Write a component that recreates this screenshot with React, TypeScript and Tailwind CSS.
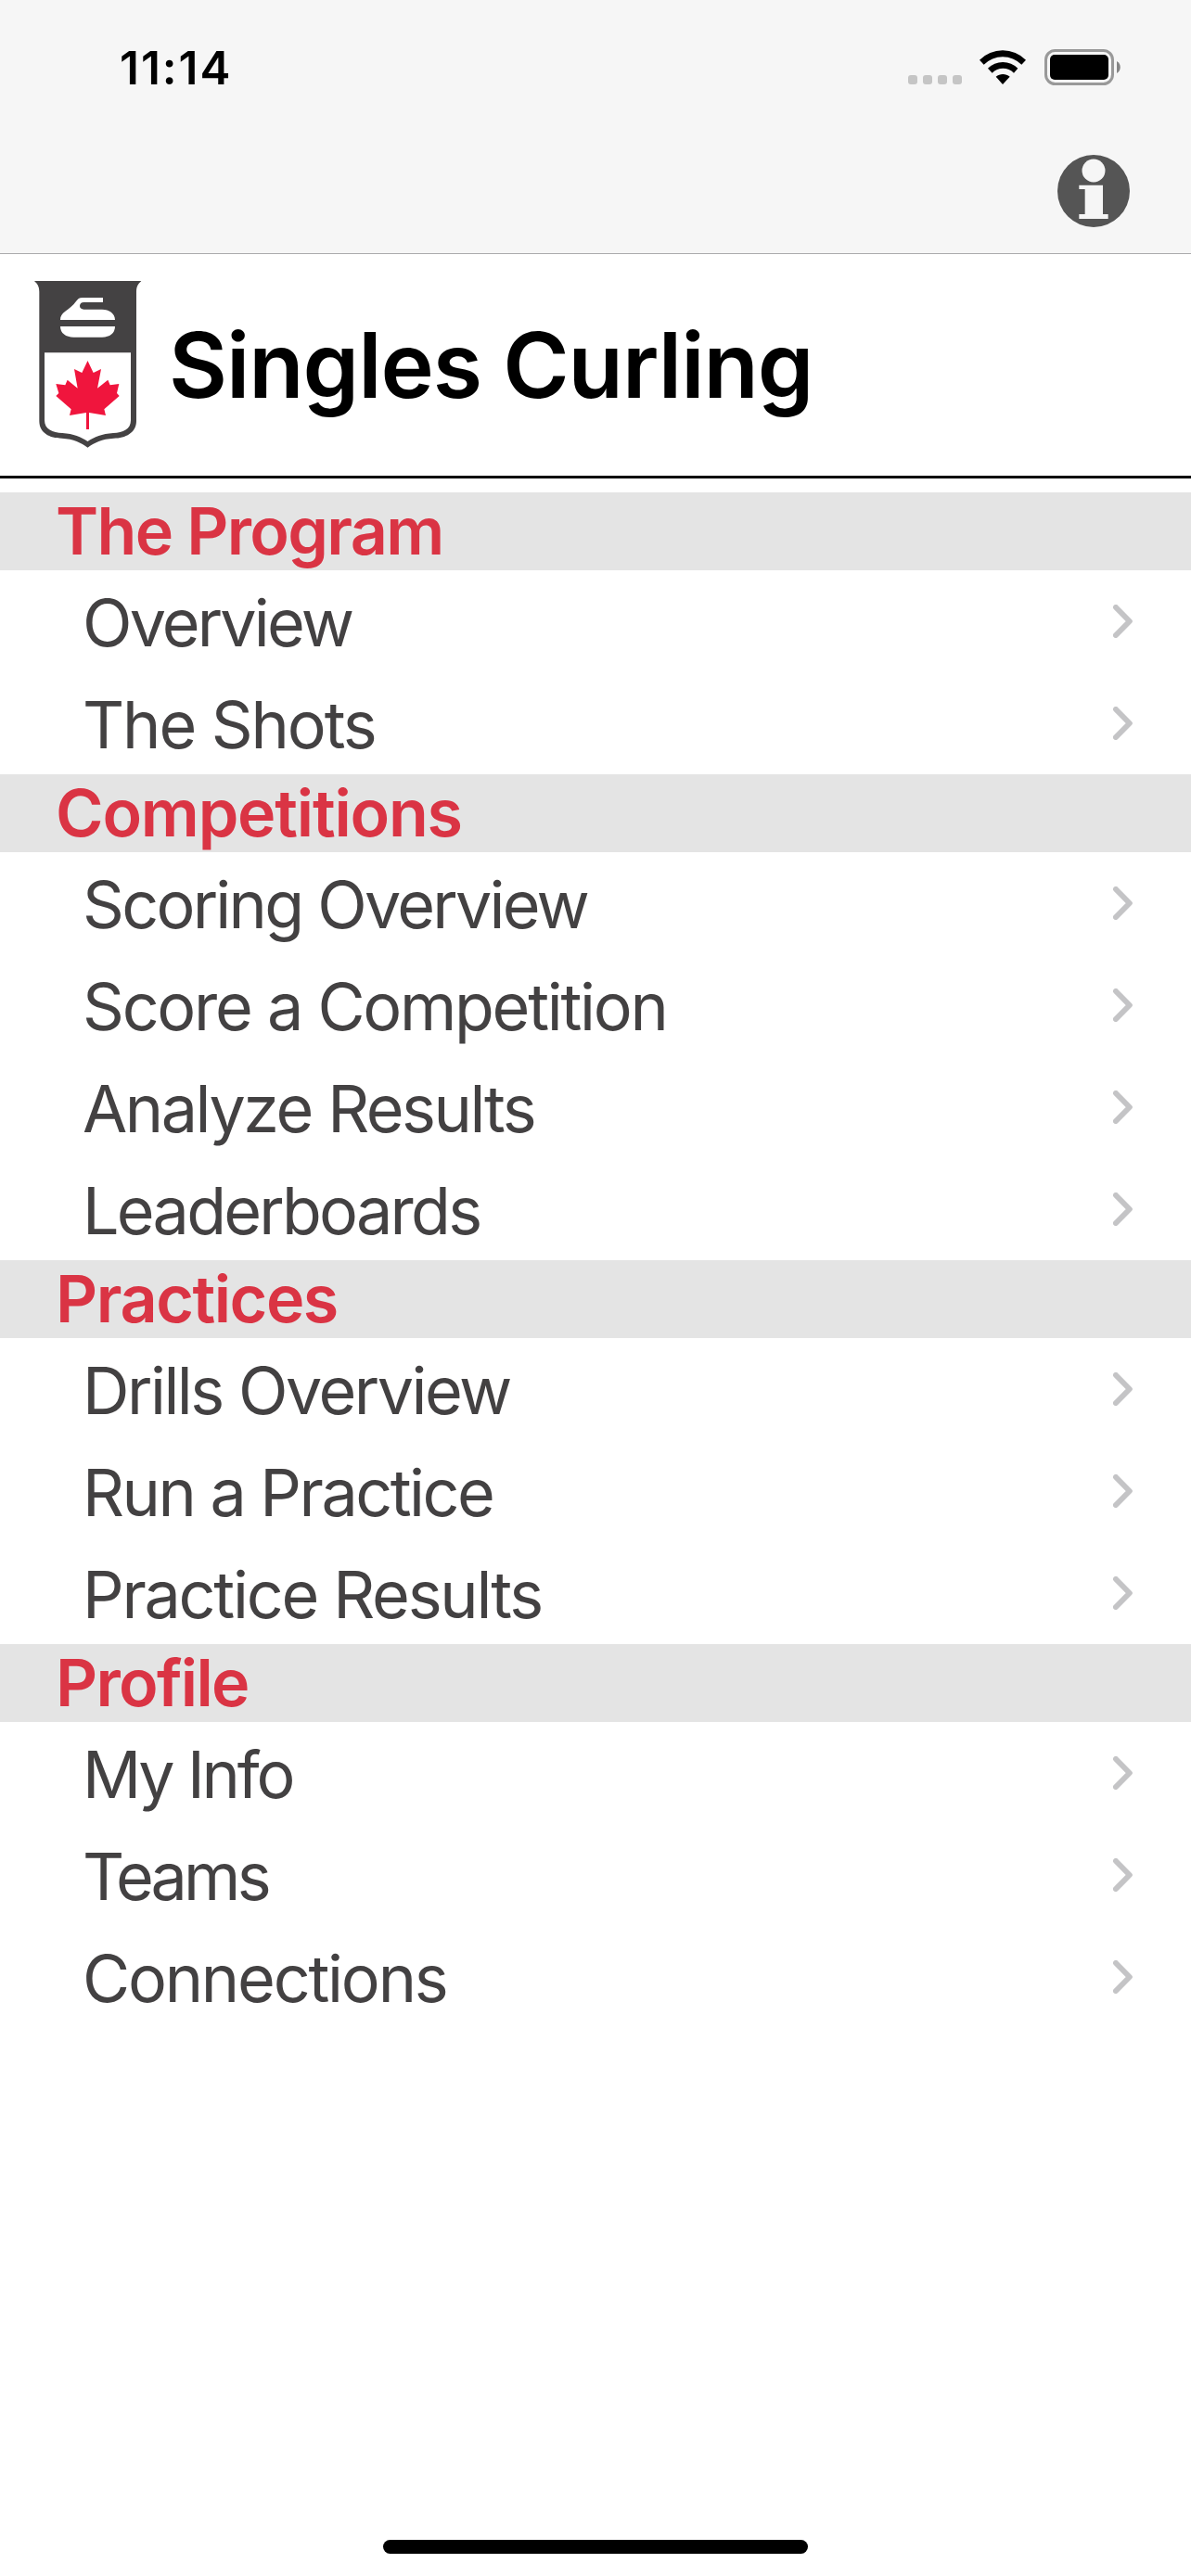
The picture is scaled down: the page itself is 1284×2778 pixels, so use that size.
type Item = { label: string; tracking: string };
type Section = { title: string; tracking: string; items: Item[] };

const sections: Section[] = [
  {
    title: "The Program",
    tracking: "tracking-[-1.7px]",
    items: [
      { label: "Overview", tracking: "tracking-[-2.85px]" },
      { label: "The Shots", tracking: "tracking-[-2.1px]" },
    ],
  },
  {
    title: "Competitions",
    tracking: "tracking-[-1.2px]",
    items: [
      { label: "Scoring Overview", tracking: "tracking-[-2.75px]" },
      { label: "Score a Competition", tracking: "tracking-[-2.27px]" },
      { label: "Analyze Results", tracking: "tracking-[-2.45px]" },
      { label: "Leaderboards", tracking: "tracking-[-2.75px]" },
    ],
  },
  {
    title: "Practices",
    tracking: "tracking-[-1.45px]",
    items: [
      { label: "Drills Overview", tracking: "tracking-[-2.5px]" },
      { label: "Run a Practice", tracking: "tracking-[-2.52px]" },
      { label: "Practice Results", tracking: "tracking-[-2.26px]" },
    ],
  },
  {
    title: "Profile",
    tracking: "tracking-[-1.71px]",
    items: [
      { label: "My Info", tracking: "tracking-[-3.2px]" },
      { label: "Teams", tracking: "tracking-[-3.8px]" },
      { label: "Connections", tracking: "tracking-[-2.2px]" },
    ],
  },
];

function WifiIcon() {
  return (
    <svg className="w-[50px] h-[37px]" viewBox="0 0 150 111">
      <path d="M0 32a106 106 0 0 1 150 0l-14 15a86 86 0 0 0-122 0z" fill="#000" />
      <path d="M27 59a68 68 0 0 1 97 0l-13 15a49 49 0 0 0-70 0z" fill="#000" />
      <path d="M53 86c13-11 32-11 45 0L75 111z" fill="#000" />
    </svg>
  );
}

function BatteryIcon() {
  return (
    <svg className="w-[82px] h-[39px]" viewBox="0 0 82 39">
      <rect x="1.5" y="1.5" width="72" height="36" rx="10" fill="none" stroke="#999" strokeWidth="3" />
      <rect x="6" y="6" width="63" height="27" rx="5" fill="#000" />
      <path d="M78 13c5 2.5 5 10.500 0 13z" fill="#858585" />
    </svg>
  );
}

function InfoIcon() {
  return (
    <svg className="w-[78px] h-[78px]" viewBox="90 51 234 234">
      <circle cx="207" cy="168" r="117" fill="#555" />
      <circle cx="207" cy="102" r="37.500" fill="#f6f6f6" />
      <path d="M160 149h77v94h17v15h-94v-15h19v-81h-19z" fill="#f6f6f6" />
    </svg>
  );
}

function Logo() {
  return (
    <svg className="w-[116px] h-[182px]" viewBox="51 66 348 546">
      <path
        d="M51 69H397C387 78 381 87 381 104V522C381 560 346 578 308 578C270 580 245 592 223.500 608C202 592 178 580 140 578C100 578 67 560 67 522V104C67 87 61 78 51 69Z"
        fill="#444243"
      />
      <path
        d="M84 301H363V520C363 549 338 560 306 561C270 563 245 574 223.500 588C202 574 178 563 142 561C110 560 84 549 84 520Z"
        fill="#fff"
      />
      <path
        d="M273 123H207C196 123 191 128 186 135C176 149 163 158 151 167C140 175 135 183 135 195H312C312 174 293 161 270 161H211C203 161 198 156 198 150C198 143 203 138 211 138H273Z"
        fill="#fff"
      />
      <path d="M135 216H312C312 238 295 251 270 251H178C153 251 135 238 135 216Z" fill="#fff" />
      <path
        d="M223.500 327L242 366L267 354L255 416L289 389L296 406L325 402L318 432L326 441L277 484L282 504L228 495V549H219V495L165 504L170 484L121 441L130 432L121 402L151 406L158 389L191 416L180 354L205 366Z"
        fill="#f0153d"
      />
    </svg>
  );
}

function Chevron() {
  return (
    <svg
      className="w-[21px] h-[36px]"
      viewBox="0 0 21 36"
      fill="none"
      stroke="#c4c4c6"
      strokeWidth="6"
      strokeLinecap="round"
      strokeLinejoin="round"
    >
      <path d="M3 3l14.800 15L3 33" />
    </svg>
  );
}

function StatusBar() {
  return (
    <div className="flex justify-between h-[146px] pl-[129px] pr-[76px]">
      <span className="mt-[43px] text-[49.5px] leading-[60px] font-semibold tracking-[1.98px] text-black">
        11:14
      </span>
      <div className="flex mt-[53px] h-[39px]">
        <div className="flex gap-[6px] mt-[28px] mr-[19px]">
          <span className="size-[10px] rounded-[3px] bg-[#c5c5c5]" />
          <span className="size-[10px] rounded-[3px] bg-[#c5c5c5]" />
          <span className="size-[10px] rounded-[3px] bg-[#c5c5c5]" />
          <span className="size-[10px] rounded-[3px] bg-[#c5c5c5]" />
        </div>
        <div className="mt-px mr-[20px]">
          <WifiIcon />
        </div>
        <BatteryIcon />
      </div>
    </div>
  );
}

export default function App() {
  return (
    <div className="flex flex-col w-full h-[2778px] bg-white overflow-hidden font-['Inter',sans-serif]">
      <header className="h-[274px] bg-[#f6f6f6] border-b border-[#aaaaac]">
        <StatusBar />
        <div className="flex justify-end pt-[21px] pr-[66px]">
          <button aria-label="Info">
            <InfoIcon />
          </button>
        </div>
      </header>

      <div className="flex h-[242px] border-b-[3px] border-black pl-[37px]">
        <div className="pt-[28px] w-[145px]">
          <Logo />
        </div>
        <h1 className="mt-[60px] text-[97px] leading-[120px] font-semibold tracking-[-1.09px] text-black whitespace-nowrap">
          Singles Curling
        </h1>
      </div>

      <main className="flex-1 pt-[15px]">
        {sections.map((section) => (
          <section key={section.title}>
            <h2 className="h-[84px] pl-[60px] bg-[#e4e4e4] text-[70px] leading-[84px] font-semibold text-[#da3444]">
              <span className={section.tracking}>{section.title}</span>
            </h2>
            <ul>
              {section.items.map((item) => (
                <li key={item.label} className="flex items-center justify-between h-[110px] pl-[89px] pr-[63px]">
                  <span className={`mt-[3px] text-[70px] leading-[107px] text-[#434142] ${item.tracking}`}>
                    {item.label}
                  </span>
                  <Chevron />
                </li>
              ))}
            </ul>
          </section>
        ))}
      </main>

      <div className="flex justify-center pb-[24px]">
        <div className="w-[458px] h-[15px] rounded-full bg-black" />
      </div>
    </div>
  );
}
